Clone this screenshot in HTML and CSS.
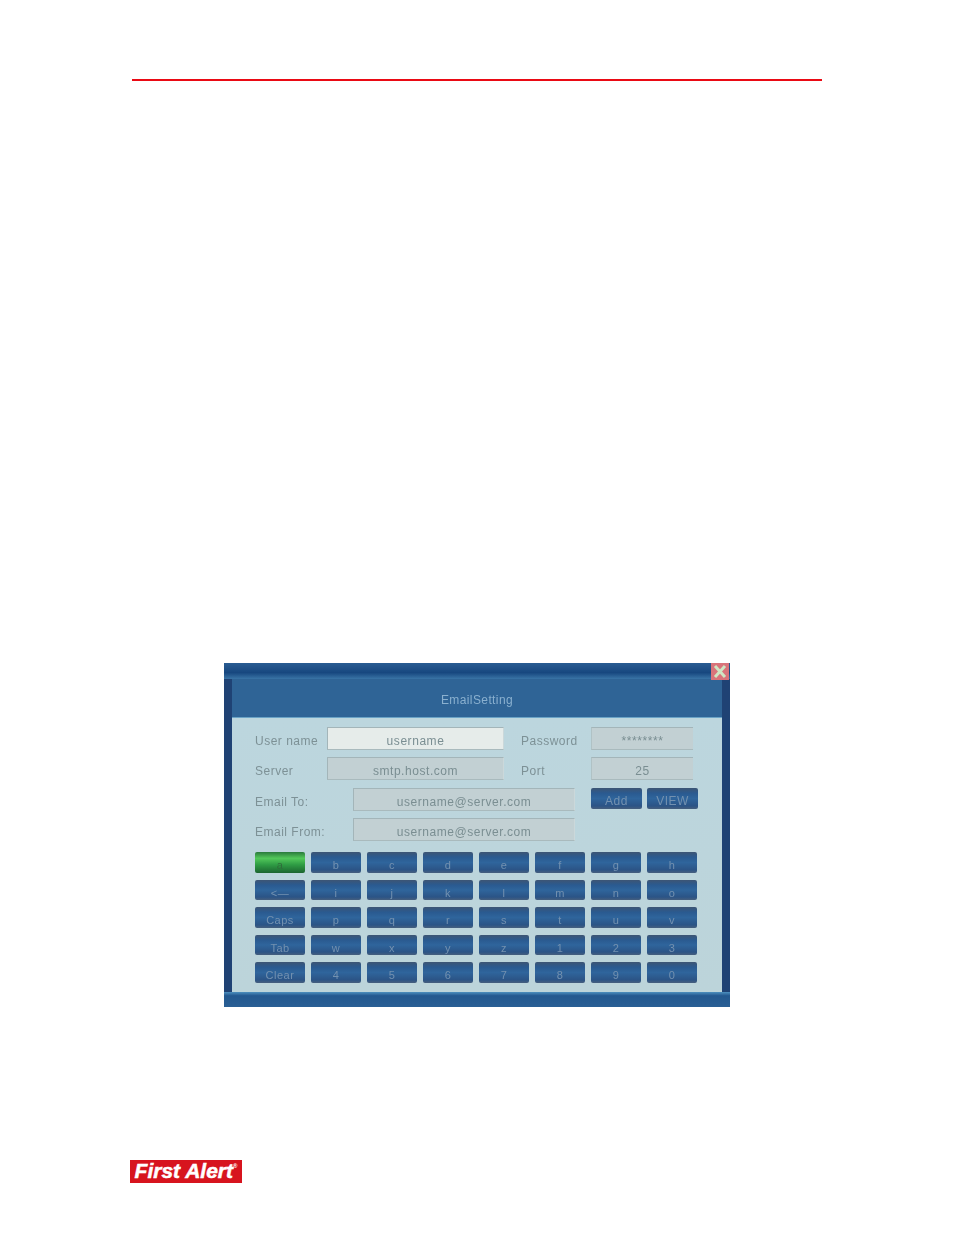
FILE: index.html
```html
<!DOCTYPE html>
<html lang="en">
  <head>
    <meta charset="UTF-8" />
    <meta name="viewport" content="width=device-width, initial-scale=1.0" />
    <title>EmailSetting</title>
    <link rel="stylesheet" href="styles.css">
  </head>
  <body>
    <div class="regel"></div>

    <section class="vindue">
      <div class="top"></div>
      <button class="luk" aria-label="Luk">
        <svg viewBox="0 0 18 17" width="18" height="17">
          <path d="M4 3 L14 14 M14 3 L4 14" stroke="#cfe6c4" stroke-width="3" fill="none" />
        </svg>
      </button>
      <h1 class="titel">EmailSetting</h1>
      <div class="indhold">
        <div class="raekke">
          <label class="lbl lbl-kort">User name</label>
          <div class="felt felt-navn aktiv">username</div>
          <label class="lbl lbl-hoejre">Password</label>
          <div class="felt felt-lille">********</div>
        </div>
        <div class="raekke">
          <label class="lbl lbl-kort">Server</label>
          <div class="felt felt-navn">smtp.host.com</div>
          <label class="lbl lbl-hoejre">Port</label>
          <div class="felt felt-lille">25</div>
        </div>
        <div class="raekke">
          <label class="lbl lbl-lang">Email To:</label>
          <div class="felt felt-mail">username@server.com</div>
          <div class="knapper">
            <button class="tast">Add</button>
            <button class="tast">VIEW</button>
          </div>
        </div>
        <div class="raekke">
          <label class="lbl lbl-lang">Email From:</label>
          <div class="felt felt-mail">username@server.com</div>
        </div>

        <div class="tastatur">
          <button class="tast valgt">a</button>
          <button class="tast">b</button>
          <button class="tast">c</button>
          <button class="tast">d</button>
          <button class="tast">e</button>
          <button class="tast">f</button>
          <button class="tast">g</button>
          <button class="tast">h</button>
          <button class="tast">&lt;—</button>
          <button class="tast">i</button>
          <button class="tast">j</button>
          <button class="tast">k</button>
          <button class="tast">l</button>
          <button class="tast">m</button>
          <button class="tast">n</button>
          <button class="tast">o</button>
          <button class="tast">Caps</button>
          <button class="tast">p</button>
          <button class="tast">q</button>
          <button class="tast">r</button>
          <button class="tast">s</button>
          <button class="tast">t</button>
          <button class="tast">u</button>
          <button class="tast">v</button>
          <button class="tast">Tab</button>
          <button class="tast">w</button>
          <button class="tast">x</button>
          <button class="tast">y</button>
          <button class="tast">z</button>
          <button class="tast">1</button>
          <button class="tast">2</button>
          <button class="tast">3</button>
          <button class="tast">Clear</button>
          <button class="tast">4</button>
          <button class="tast">5</button>
          <button class="tast">6</button>
          <button class="tast">7</button>
          <button class="tast">8</button>
          <button class="tast">9</button>
          <button class="tast">0</button>
        </div>
      </div>
      <div class="bund"></div>
    </section>

    <div class="logo">First Alert<sup>®</sup></div>
  </body>
</html>
```

FILE: styles.css
```css
* {
  margin: 0;
  padding: 0;
  box-sizing: border-box;
}

body {
  background-color: #fff;
  font-family: "Liberation Sans", Arial, sans-serif;
  height: 1235px;
  overflow: hidden;
}

.regel {
  width: 690px;
  height: 2px;
  margin: 79px 0 0 132px;
  background-color: #ea0a14;
}

.vindue {
  position: relative;
  width: 506px;
  height: 344px;
  margin: 582px 0 0 224px;
  background-color: #1f4274;
  display: flex;
  flex-direction: column;
  filter: blur(0.4px);
}

.top {
  height: 16px;
  background: linear-gradient(#2a5c92, #17477f 60%, #3a74a6);
}

.luk {
  position: absolute;
  top: 0;
  right: 1px;
  width: 18px;
  height: 17px;
  border: none;
  background-color: #d9737a;
  display: block;
}

.luk svg {
  display: block;
}

.titel {
  height: 39px;
  margin: 0 8px;
  background-color: #2f6496;
  color: #8ab0cf;
  font-size: 12px;
  font-weight: normal;
  letter-spacing: 0.4px;
  line-height: 42px;
  text-align: center;
  border-bottom: 1px solid #6aa3c6;
}

.indhold {
  height: 274px;
  margin: 0 8px;
  padding: 9px 0 0 23px;
  background: linear-gradient(#bcd6de, #bcd4da);
  color: #7d9196;
  font-size: 12px;
}

.raekke {
  display: flex;
  align-items: flex-start;
  height: 30.33px;
}

.lbl {
  height: 23px;
  line-height: 28px;
  letter-spacing: 0.5px;
}

.lbl-kort {
  width: 72px;
}

.lbl-lang {
  width: 98px;
}

.lbl-hoejre {
  width: 70px;
  margin-left: 17px;
}

.felt {
  height: 23px;
  background-color: #c2d0d3;
  border: 1px solid #a3b5b9;
  border-right-color: #cbd8da;
  border-bottom-color: #a9babd;
  color: #7a8e92;
  font-size: 12px;
  letter-spacing: 0.55px;
  line-height: 27px;
  text-align: center;
}

.felt-navn {
  width: 177px;
}

.felt-lille {
  width: 102px;
  border-left-color: #b0c2c5;
  border-right: none;
}

.felt-mail {
  width: 222px;
}

.aktiv {
  background-color: #e6ecea;
}

.knapper {
  display: flex;
  gap: 5px;
  margin-left: 16px;
}

.knapper .tast {
  width: 51px;
  height: 21px;
  font-size: 12px;
}

.tastatur {
  display: grid;
  grid-template-columns: repeat(8, 50px);
  grid-auto-rows: 20.5px;
  column-gap: 6px;
  row-gap: 7px;
  margin-top: 3.7px;
}

.tast {
  border: none;
  border-radius: 2px;
  font-family: inherit;
  font-size: 11px;
  letter-spacing: 0.5px;
  line-height: 26px;
  color: #7391b0;
  background: linear-gradient(#3d5574, #2a5a90 25%, #2f659c 50%, #2b5486 85%, #465f7e);
  overflow: hidden;
}

.valgt {
  color: #2f6f3a;
  background: linear-gradient(#2a7a3c, #52c85a 30%, #2f9d45 60%, #1c6530);
}

.bund {
  height: 15px;
  background: linear-gradient(#4c8fbe, #23588f 25%, #2a5f94);
}

.logo {
  width: 112px;
  height: 23px;
  margin: 153px 0 0 130px;
  background-color: #d7141e;
  color: #fff;
  font-size: 21px;
  font-style: italic;
  font-weight: bold;
  letter-spacing: 0;
  line-height: 21px;
  text-align: center;
  white-space: nowrap;
  -webkit-text-stroke: 0.5px #fff;
}

.logo sup {
  font-size: 6px;
  font-style: normal;
  vertical-align: 10px;
  line-height: 0;
  -webkit-text-stroke: 0;
}
```
